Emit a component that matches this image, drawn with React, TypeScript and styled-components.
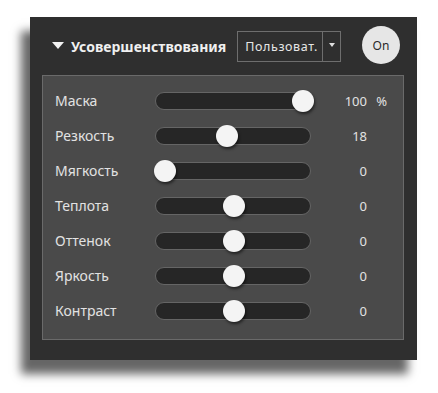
import React from "react"
import styled, { createGlobalStyle } from "styled-components"

type Setting = {
  label: string
  value: string
  fraction: number
  unit?: string
}

const settings: Setting[] = [
  { label: "Маска", value: "100", fraction: 1, unit: "%" },
  { label: "Резкость", value: "18", fraction: 0.45 },
  { label: "Мягкость", value: "0", fraction: 0 },
  { label: "Теплота", value: "0", fraction: 0.5 },
  { label: "Оттенок", value: "0", fraction: 0.5 },
  { label: "Яркость", value: "0", fraction: 0.5 },
  { label: "Контраст", value: "0", fraction: 0.5 },
]

const GlobalStyle = createGlobalStyle`
  body {
    margin: 0;
    background: #ffffff;
    font-family: "Noto Sans", "Open Sans", sans-serif;
  }
`

export default function App() {
  return (
    <>
      <GlobalStyle />
      <Page>
        <Panel>
          <Header>
            <Caret />
            <Title>Усовершенствования</Title>
            <Select>
              <SelectText>Пользоват.</SelectText>
              <SelectArrow>
                <SmallCaret />
              </SelectArrow>
            </Select>
            <OnButton>On</OnButton>
          </Header>
          <Box>
            {settings.map((s) => (
              <Row key={s.label}>
                <Label>{s.label}</Label>
                <Track>
                  <Thumb style={{ left: `${s.fraction * 138}px` }} />
                </Track>
                <Value>{s.value}</Value>
                <Unit>{s.unit}</Unit>
              </Row>
            ))}
          </Box>
        </Panel>
      </Page>
    </>
  )
}

const Page = styled.div`
  padding: 17px 21px 0 30px;
  height: 393px;
  box-sizing: border-box;
`
const Panel = styled.div`
  width: 387px;
  height: 343px;
  box-sizing: border-box;
  background: #2f2f2f;
  padding: 0 13px 20px 12px;
  box-shadow: -9px 14px 9px rgba(0, 0, 0, 0.6);
  display: flex;
  flex-direction: column;
`
const Header = styled.div`
  height: 58px;
  display: flex;
  align-items: center;
  padding: 0 0 0 10px;
`
const Caret = styled.span`
  width: 0;
  height: 0;
  border-left: 6px solid transparent;
  border-right: 6px solid transparent;
  border-top: 7px solid #f2f2f2;
  margin-right: 7px;
  margin-top: -1px;
`
const Title = styled.span`
  color: #f0f0f0;
  font-size: 14px;
  font-weight: 700;
`
const Select = styled.div`
  margin-left: 11px;
  width: 104px;
  height: 31px;
  box-sizing: border-box;
  border: 1px solid #6e6e6e;
  display: flex;
  align-items: stretch;
`
const SelectText = styled.span`
  flex: 1;
  display: flex;
  align-items: center;
  padding-left: 7px;
  color: #e6e6e6;
  font-size: 12.5px;
  letter-spacing: 0.6px;
  white-space: nowrap;
  overflow: hidden;
`
const SelectArrow = styled.span`
  width: 17px;
  border-left: 1px solid #6e6e6e;
  display: flex;
  align-items: center;
  justify-content: center;
`
const SmallCaret = styled.span`
  width: 0;
  height: 0;
  border-left: 3px solid transparent;
  border-right: 3px solid transparent;
  border-top: 4px solid #e0e0e0;
  margin-top: -3px;
`
const OnButton = styled.div`
  margin-left: auto;
  margin-right: 4px;
  margin-top: -2px;
  width: 38px;
  height: 38px;
  border-radius: 50%;
  background: #e6e6e6;
  color: #2a2a2a;
  font-size: 12px;
  display: flex;
  align-items: center;
  justify-content: center;
`
const Box = styled.div`
  flex: 1;
  background: #4a4a4a;
  border: 1px solid #6a6a6a;
  padding: 7px 0 11px 12px;
  display: flex;
  flex-direction: column;
`
const Row = styled.div`
  height: 35px;
  display: grid;
  grid-template-columns: 100px 156px 56px 20px;
  align-items: center;
`
const Label = styled.span`
  color: #e2e2e2;
  font-size: 14px;
`
const Track = styled.div`
  position: relative;
  height: 18px;
  box-sizing: border-box;
  border-radius: 9px;
  background: #262626;
  border: 1px solid #656565;
`
const Thumb = styled.span`
  position: absolute;
  top: -3px;
  width: 22px;
  height: 22px;
  margin-left: -2px;
  border-radius: 50%;
  background: #f4f4f4;
  box-shadow: 1px 2px 3px rgba(0, 0, 0, 0.55);
`
const Value = styled.span`
  text-align: right;
  color: #e2e2e2;
  font-size: 13px;
`
const Unit = styled.span`
  text-align: right;
  color: #e2e2e2;
  font-size: 13px;
`
